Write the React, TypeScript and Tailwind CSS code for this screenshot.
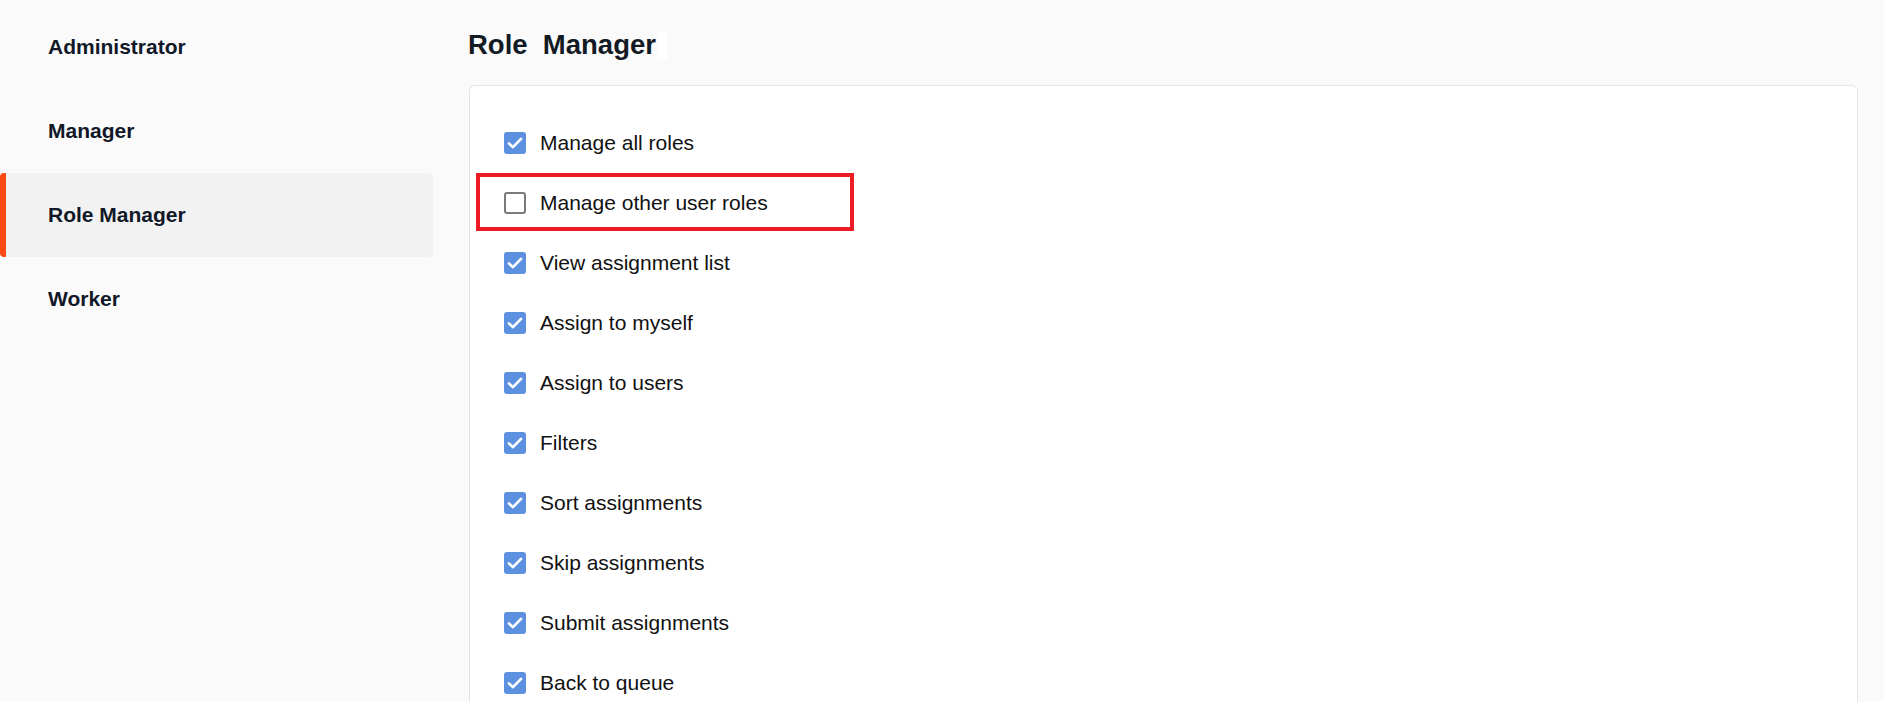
import React, { useState } from 'react';

const roles = ['Administrator', 'Manager', 'Role Manager', 'Worker'];

const permissions = [
  { label: 'Manage all roles', on: true },
  { label: 'Manage other user roles', on: false, flagged: true },
  { label: 'View assignment list', on: true },
  { label: 'Assign to myself', on: true },
  { label: 'Assign to users', on: true },
  { label: 'Filters', on: true },
  { label: 'Sort assignments', on: true },
  { label: 'Skip assignments', on: true },
  { label: 'Submit assignments', on: true },
  { label: 'Back to queue', on: true },
];

const Check = ({ on }: { on: boolean }) =>
  on ? (
    <span className="w-[22px] h-[22px] rounded-[3px] bg-[#5b91df] shrink-0">
      <svg width="22" height="22" viewBox="0 0 22 22" fill="none">
        <polyline points="5,11.5 9,15.2 17,6.8" stroke="white" strokeWidth="2.6" strokeLinecap="round" strokeLinejoin="round" />
      </svg>
    </span>
  ) : (
    <span className="w-[22px] h-[22px] rounded-[3px] border-2 border-[#7a7a7a] bg-white shrink-0" />
  );

const App = () => {
  const [active] = useState('Role Manager');
  return (
    <div className="flex h-[702px] overflow-hidden bg-[#fafafa] text-[#111827] font-['Liberation_Sans',Arial,sans-serif]">
      <div className="w-[433px] shrink-0 pt-[5px]">
        {roles.map((r) => (
          <div
            key={r}
            className={
              r === active
                ? 'h-[84px] flex items-center pl-[42px] bg-[#f2f2f2] rounded-[4px] border-l-[6px] border-[#fc4a14] text-[21px] font-bold'
                : 'h-[84px] flex items-center pl-[48px] text-[21px] font-bold'
            }
          >
            {r}
          </div>
        ))}
      </div>
      <div className="flex-1 pl-[36px] pr-[26px] pt-[29px]">
        <h1 className="text-[27.5px] leading-[32px] font-bold text-[#131a24] whitespace-pre flex items-center">
          <span className="-ml-[1px]">Role  Manager</span>
          <span className="inline-block w-[9px] h-[27px] bg-white ml-[2px]" />
        </h1>
        <div className="mt-[24px] bg-white border border-[#e4e4e4] rounded-[6px] pt-[27px] pl-[34px] h-[700px]">
          {permissions.map((p) => (
            <div key={p.label} className="relative h-[60px] flex items-center gap-[14px]">
              <Check on={p.on} />
              <span className="text-[21px] text-[#111111]">{p.label}</span>
              {p.flagged && (
                <div className="absolute left-[-28px] top-0 w-[378px] h-[58px] border-4 border-[#ed1c24]" />
              )}
            </div>
          ))}
        </div>
      </div>
    </div>
  );
};

export default App;
